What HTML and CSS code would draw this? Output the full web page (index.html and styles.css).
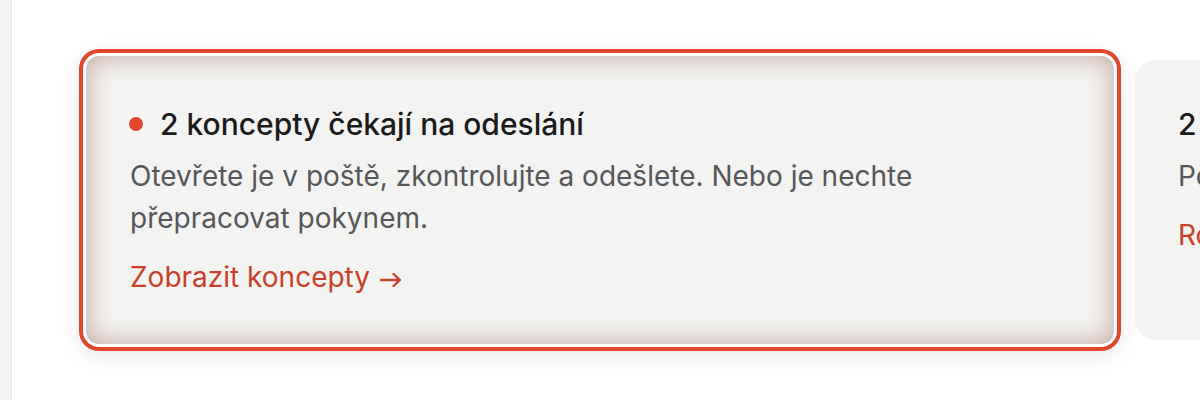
FILE: index.html
```html
<!DOCTYPE html>
<html lang="cs">
<head>
    <meta charset="UTF-8">
    <meta name="viewport" content="width=device-width, initial-scale=1.0">
    <title>Koncepty</title>
    <link rel="stylesheet" href="styles.css">
</head>
<body>
    <!-- Left rail -->
    <div class="rail"></div>

    <div class="cards">
        <!-- Highlighted card -->
        <div class="card card-active">
            <h2 class="card-title"><span class="dot"></span>2 koncepty čekají na odeslání</h2>
            <p class="card-text">Otevřete je v poště, zkontrolujte a odešlete. Nebo je nechte přepracovat pokynem.</p>
            <a class="card-link" href="#">Zobrazit koncepty
                <svg class="arrow" width="22" height="16" viewBox="0 0 22 16" aria-hidden="true">
                    <path d="M1 8H20M13.5 2L20 8L13.5 14" fill="none" stroke="currentColor" stroke-width="2.3" stroke-linecap="round" stroke-linejoin="round"/>
                </svg>
            </a>
        </div>

        <div class="card card-next">
            <h2 class="card-title">2 schůzky</h2>
            <p class="card-text">Po</p>
            <a class="card-link" href="#">Ro</a>
        </div>
    </div>
</body>
</html>
```

FILE: styles.css
```css
/* Base */
body {
    margin: 0;
    height: 400px;
    overflow: hidden;
    display: flex;
    background: #ffffff;
    font-family: Inter, "Noto Sans", sans-serif;
}
.rail {
    width: 11px;
    flex-shrink: 0;
    background: #f2f2f0;
    border-right: 1px solid #e4e4e2;
}
.cards {
    display: flex;
    align-items: center;
    gap: 21px;
    padding-left: 74px;
    min-width: 0;
}
/* Card */
.card {
    flex-shrink: 0;
    box-sizing: border-box;
    width: 1028px;
    background: #f3f3f1;
    padding: 50px 44px 0 44px;
    border-radius: 13px;
}
.card-active {
    height: 288px;
    box-shadow:
        inset 0 0 22px 3px rgba(160, 110, 100, 0.5),
        0 0 0 3px #ffffff,
        0 0 0 7px #e1472b,
        0 6px 28px 4px rgba(0, 0, 0, 0.12);
}
.card-next {
    width: 65px;
    height: 280px;
    padding: 46px 0 0 43px;
    border-radius: 20px 0 0 20px;
    overflow: hidden;
    white-space: nowrap;
}
.card-title {
    margin: 0;
    display: flex;
    align-items: center;
    font-size: 30px;
    line-height: 36px;
    font-weight: 500;
    color: #1b1b1b;
}
.dot {
    flex-shrink: 0;
    width: 14px;
    height: 14px;
    border-radius: 50%;
    background: #e1472b;
    margin-left: -1px;
    margin-right: 17px;
}
.card-text {
    margin: 13px 0 0 0;
    max-width: 840px;
    font-size: 28px;
    line-height: 42px;
    color: #55575a;
}
.card-link {
    display: inline-block;
    margin-top: 17px;
    font-size: 28px;
    line-height: 42px;
    color: #c8402a;
    text-decoration: none;
}
.arrow {
    vertical-align: -1px;
    margin-left: 2px;
}
```
